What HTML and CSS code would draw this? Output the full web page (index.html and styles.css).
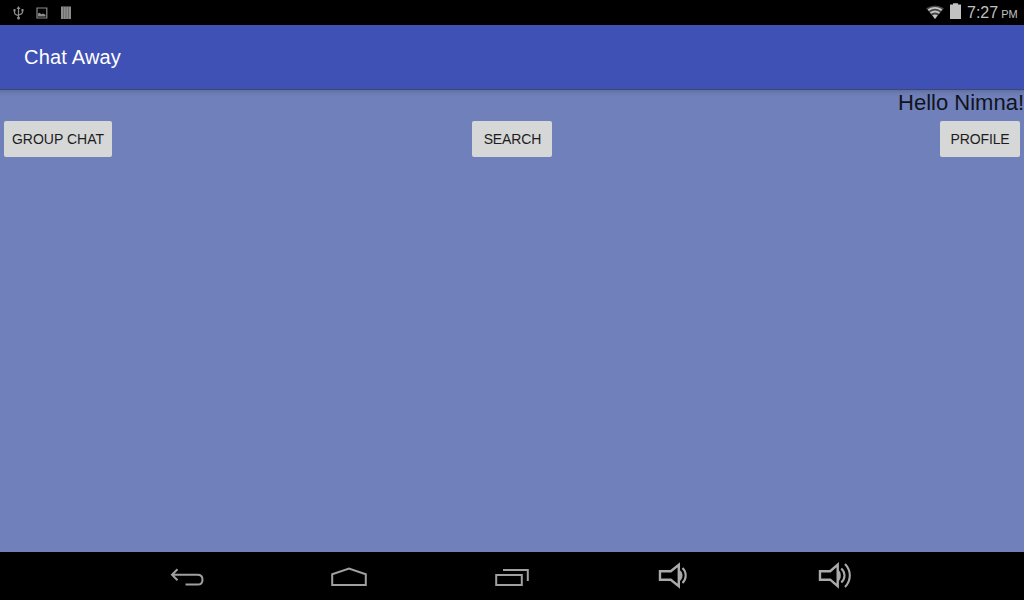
FILE: index.html
```
<!DOCTYPE html>
<html lang="en">
<head>
<meta charset="utf-8">
<title>Chat Away</title>
<link rel="stylesheet" href="styles.css">
</head>
<body>
<header class="status-bar">
  <svg class="notices" width="80" height="25" viewBox="0 0 80 25">
    <g fill="none" stroke="#8c8c8c" stroke-width="1.200">
      <path d="M18.500 8v10M14.500 10v2.500q0 2 4 3.200M22.500 10v2q0 2-4 3"/>
      <path d="M37 8h9.800v10H37z" stroke-width="1.200"/>
    </g>
    <g fill="#8c8c8c">
      <path d="M18.500 6l2 3h-4zM13.500 9h2v2.500h-2zM21.500 9h2v2.500h-2z"/>
      <circle cx="18.500" cy="18" r="1.500"/>
      <path d="M38 16.500v-3l1.500-.8 2 1.500 1.500-.8 2.500 1.300v1.800z"/>
      <path d="M61 6.500h10V19H61z"/>
    </g>
    <path d="M63.500 6.500V19M66 6.500V19M68.500 6.500V19" stroke="#555" stroke-width=".6"/>
  </svg>
  <div class="system">
    <svg width="40" height="25" viewBox="924 0 40 25">
      <path d="M926 8.300Q935 2.500 944 8.300L935 19z" fill="#444"/>
      <g fill="none" stroke="#c4c4c4" stroke-width="1.900">
        <path d="M928.300 10.100Q935 5.600 941.700 10.100"/>
        <path d="M930.500 13Q935 10 939.500 13"/>
      </g>
      <path d="M932.300 15.300Q935 13.700 937.700 15.300L935 19z" fill="#c4c4c4"/>
      <path d="M950 4.500h3V3.300h5v1.200h3V19h-11z" fill="#c1c1c1"/>
    </svg>
    <span class="time">7:27</span><span class="period">PM</span>
  </div>
</header>
<div class="app-bar"><h1>Chat Away</h1></div>
<main>
  <p class="greeting">Hello Nimna!</p>
  <div class="actions">
    <button class="group">GROUP CHAT</button>
    <button class="search">SEARCH</button>
    <button class="profile">PROFILE</button>
  </div>
</main>
<nav>
  <svg viewBox="157 552 60 48"><path d="M177.500 569.300l-5.500 5.500 5.500 5.500M172 574.800h25.500q5 0 5 4.900t-5 4.900H185.500"/></svg>
  <svg viewBox="319 552 60 48"><path d="M332.200 574.200L349 568.500l16.800 5.700V585h-33.600z"/></svg>
  <svg viewBox="481 552 60 48"><path d="M496.200 575h25.600v10h-25.600zM503 570h24.800v11"/></svg>
  <svg class="volume" viewBox="643 552 60 48"><path d="M660 571.200h10.800l8-6.500v21.500l-8-6.500H660z"/><path class="solid" d="M679 569.500q3.500 2 3.500 6t-3.500 6z"/><path class="wave" d="M682.500 568q3.200 3 3.200 7.500t-3.200 7.500"/></svg>
  <svg class="volume" viewBox="805 552 60 48"><path d="M820 571.200h10.200l7.500-6.500v21.500l-7.500-6.500H820z"/><path class="solid" d="M838 569.500q2.800 2 2.800 6t-2.800 6z"/><path class="wave" d="M841.300 568.500q3.200 3 3.200 7t-3.200 7M845 564q4.800 5 4.800 11.500T845 587"/></svg>
</nav>
</body>
</html>
```
FILE: styles.css
```
* { box-sizing: border-box; }
body {
  margin: 0;
  width: 1024px;
  height: 600px;
  display: flex;
  flex-direction: column;
  overflow: hidden;
  font-family: "Liberation Sans", sans-serif;
  background: #7080ba;
}
h1, p { margin: 0; font-weight: normal; }
svg { display: block; }
.status-bar {
  flex: 0 0 25px;
  height: 25px;
  min-height: 0;
  display: flex;
  justify-content: space-between;
  background: #000;
  color: #c1c1c1;
}
.system { display: flex; width: 100px; height: 25px; line-height: 25px; white-space: nowrap; }
.time { margin-left: 3px; font-size: 16px; }
.period { height: 25px; margin-left: 3px; font-size: 11px; line-height: 28px; }
.app-bar {
  flex: 0 0 65px;
  padding-left: 24px;
  background: #3f51b5;
  border-bottom: 1px solid #3b4777;
  color: #fff;
}
h1 { font-size: 20px; line-height: 64px; letter-spacing: .2px; }
main {
  flex: 1;
  background: linear-gradient(#606f9f, #6b7bb1 3px, #7080ba 7px);
}
.greeting {
  height: 27px;
  line-height: 25px;
  font-size: 22px;
  text-align: right;
  color: #11131c;
}
.actions {
  display: grid;
  grid-template-columns: 1fr 80px 1fr;
  padding: 4px;
}
button {
  width: 80px;
  height: 36px;
  padding: 0;
  border: 0;
  border-radius: 2px;
  background: #d6d7d7;
  color: #1d1d1d;
  font: 14px/36px "Liberation Sans", sans-serif;
  white-space: nowrap;
}
.group { width: 108px; }
.search { letter-spacing: -.1px; padding-left: 1px; }
.profile { justify-self: end; letter-spacing: -.1px; }
nav {
  flex: 0 0 48px;
  display: flex;
  gap: 102px;
  padding-left: 157px;
  background: #000;
}
nav svg {
  width: 60px;
  height: 48px;
  fill: none;
  stroke: #a0a0a0;
  stroke-width: 2;
}
nav .volume { stroke: #aaa; stroke-width: 2.400; }
nav .solid { fill: #aaa; stroke: none; }
nav .wave { stroke-width: 2.100; }
```
